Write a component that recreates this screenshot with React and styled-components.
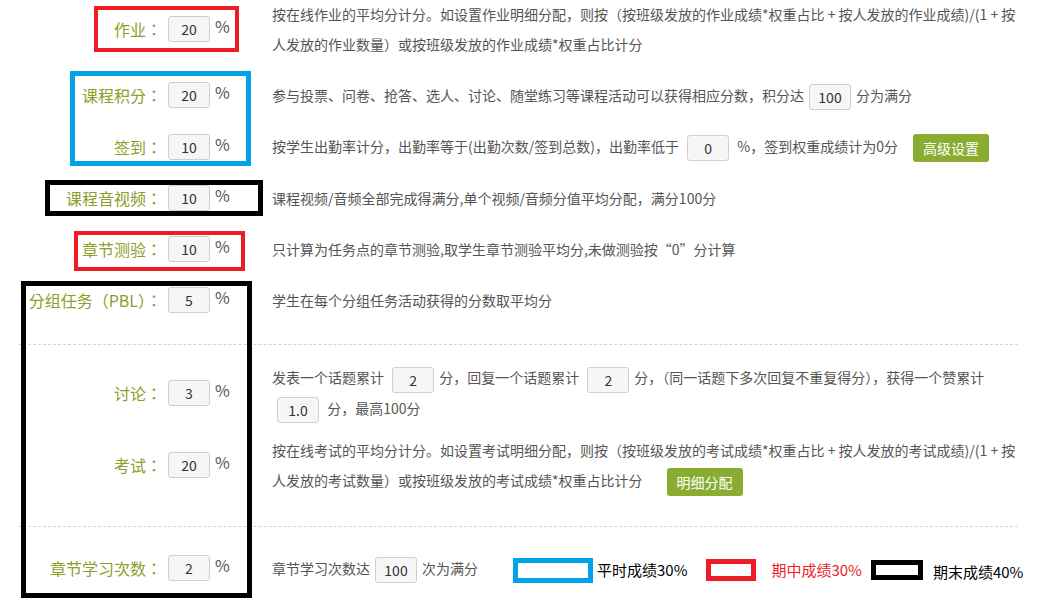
import React from 'react';
import styled, { createGlobalStyle } from 'styled-components';

const GlobalStyle = createGlobalStyle`
  html, body {
    margin: 0;
    padding: 0;
    background: #fff;
  }
  body {
    font-family: "Noto Sans CJK SC", "Noto Sans", sans-serif;
  }
`;

const Page = styled.div`
  position: relative;
  width: 1000px;
  padding: 0 34px 0 18px;
  height: 600px;
  overflow: hidden;
`;

const Sheet = styled.div`
  margin-top: -1px;
`;

const Section = styled.div`
  display: flex;
  flex-direction: column;
  gap: ${(p) => p.gap}px;
  padding-top: ${(p) => p.top}px;
  padding-bottom: ${(p) => p.bottom}px;
  border-bottom: ${(p) => (p.last ? 'none' : '1px dashed #d4d4d4')};
`;

const Row = styled.div`
  display: flex;
  align-items: center;
`;

const Field = styled.div`
  width: 254px;
  flex-shrink: 0;
  display: flex;
  align-items: center;
`;

const Label = styled.span`
  width: 144px;
  text-align: right;
  font-family: "Noto Sans CJK TC", "Noto Sans CJK SC", sans-serif;
  font-size: 16px;
  line-height: 26px;
  color: #8c9e2c;
  white-space: nowrap;
`;

const Num = styled.input`
  box-sizing: border-box;
  width: 42px;
  height: 26px;
  margin: ${(p) => (p.inline ? '0 5px' : '0 0 0 6px')};
  padding: 0;
  border: 1px solid #cfcfcf;
  border-radius: 3px;
  background: #f6f6f6;
  color: #333;
  font-family: inherit;
  font-size: 14px;
  text-align: center;
  vertical-align: middle;
  outline: none;
`;

const Pct = styled.span`
  margin-left: 5px;
  font-size: 16px;
  line-height: 22px;
  color: #555;
  align-self: flex-start;
  margin-top: -1px;
`;

const Desc = styled.div`
  flex: 1;
  font-size: 14px;
  line-height: 30px;
  color: #555;
  white-space: nowrap;
`;

const Button = styled.span`
  display: inline-block;
  height: 28px;
  line-height: 28px;
  padding: 0 10px;
  margin-left: ${(p) => p.gap}px;
  border-radius: 3px;
  background: #8aad31;
  color: #fff;
  font-size: 14px;
  vertical-align: middle;
`;

const Legend = styled.div`
  display: inline-flex;
  align-items: center;
  margin-left: 35px;
  vertical-align: middle;
`;

const Swatch = styled.span`
  box-sizing: border-box;
  width: ${(p) => p.w}px;
  height: ${(p) => p.h}px;
  border: 5px solid ${(p) => p.color};
  margin-left: ${(p) => p.before}px;
`;

const LegendText = styled.span`
  margin-left: ${(p) => p.gap}px;
  font-size: 15px;
  line-height: 20px;
  color: ${(p) => p.color};
  margin-top: ${(p) => p.drop}px;
`;

const Mark = styled.div`
  position: absolute;
  box-sizing: border-box;
  border: ${(p) => p.bw}px solid ${(p) => p.color};
  pointer-events: none;
`;

const FieldCell = ({ label, value }) => (
  <Field>
    <Label>{label}</Label>
    <Num readOnly value={value} />
    <Pct>%</Pct>
  </Field>
);

const marks = [
  { color: '#ee1c25', bw: 4, x: 94, y: 6, w: 145, h: 46 },
  { color: '#00a2e8', bw: 5, x: 70, y: 71, w: 181, h: 95 },
  { color: '#000', bw: 5, x: 45, y: 180, w: 218, h: 36 },
  { color: '#ee1c25', bw: 4, x: 74, y: 231, w: 171, h: 40 },
  { color: '#000', bw: 5, x: 21, y: 281, w: 231, h: 317 },
];

const App = () => {
  return (
    <Page>
      <GlobalStyle />
      <Sheet>
        <Section gap={21} top={0} bottom={29}>
          <Row>
            <FieldCell label="作业：" value="20" />
            <Desc>
              按在线作业的平均分计分。如设置作业明细分配，则按（按班级发放的作业成绩*权重占比 + 按人发放的作业成绩)/(1 + 按
              <br />
              人发放的作业数量）或按班级发放的作业成绩*权重占比计分
            </Desc>
          </Row>
          <Row>
            <FieldCell label="课程积分：" value="20" />
            <Desc>
              参与投票、问卷、抢答、选人、讨论、随堂练习等课程活动可以获得相应分数，积分达
              <Num inline readOnly value="100" />
              分为满分
            </Desc>
          </Row>
          <Row>
            <FieldCell label="签到：" value="10" />
            <Desc>
              按学生出勤率计分，出勤率等于(出勤次数/签到总数)，出勤率低于{' '}
              <Num inline readOnly value="0" />{' '}
              %，签到权重成绩计为0分
              <Button gap={15}>高级设置</Button>
            </Desc>
          </Row>
          <Row>
            <FieldCell label="课程音视频：" value="10" />
            <Desc>课程视频/音频全部完成得满分,单个视频/音频分值平均分配，满分100分</Desc>
          </Row>
          <Row>
            <FieldCell label="章节测验：" value="10" />
            <Desc>只计算为任务点的章节测验,取学生章节测验平均分,未做测验按“0”分计算</Desc>
          </Row>
          <Row>
            <FieldCell label="分组任务（PBL）：" value="5" />
            <Desc>学生在每个分组任务活动获得的分数取平均分</Desc>
          </Row>
        </Section>

        <Section gap={12} top={17} bottom={30}>
          <Row>
            <FieldCell label="讨论：" value="3" />
            <Desc>
              发表一个话题累计 <Num inline readOnly value="2" />分，回复一个话题累计{' '}
              <Num inline readOnly value="2" />分，（同一话题下多次回复不重复得分），获得一个赞累计
              <br />
              <Num inline readOnly value="1.0" /> 分，最高100分
            </Desc>
          </Row>
          <Row>
            <FieldCell label="考试：" value="20" />
            <Desc>
              按在线考试的平均分计分。如设置考试明细分配，则按（按班级发放的考试成绩*权重占比 + 按人发放的考试成绩)/(1 + 按
              <br />
              人发放的考试数量）或按班级发放的考试成绩*权重占比计分
              <Button gap={24}>明细分配</Button>
            </Desc>
          </Row>
        </Section>

        <Section gap={0} top={26} bottom={0} last>
          <Row>
            <FieldCell label="章节学习次数：" value="2" />
            <Desc>
              章节学习次数达
              <Num inline readOnly value="100" />
              次为满分
              <Legend>
                <Swatch color="#00a2e8" w={80} h={25} before={0} />
                <LegendText gap={4} color="#000" drop={0}>平时成绩30%</LegendText>
                <Swatch color="#ee1c25" w={50} h={22} before={19} />
                <LegendText gap={15} color="#ee1c25" drop={0}>期中成绩30%</LegendText>
                <Swatch color="#000" w={52} h={20} before={9} />
                <LegendText gap={10} color="#000" drop={4}>期末成绩40%</LegendText>
              </Legend>
            </Desc>
          </Row>
        </Section>
      </Sheet>

      {marks.map((m, i) => (
        <Mark
          key={i}
          color={m.color}
          bw={m.bw}
          style={{ left: m.x, top: m.y, width: m.w, height: m.h }}
        />
      ))}
    </Page>
  );
};

export default App;
